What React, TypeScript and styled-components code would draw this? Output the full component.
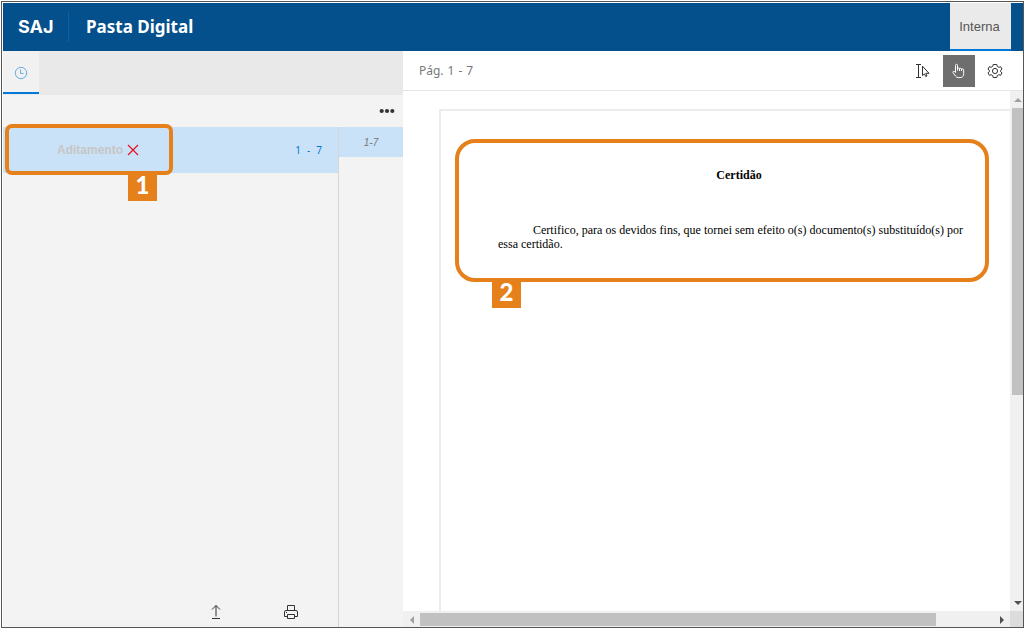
import React from "react";
import styled, { createGlobalStyle } from "styled-components";

const ui = `"Noto Sans", "Open Sans", sans-serif`;
const arial = `"Liberation Sans", Arial, sans-serif`;
const orange = "#e5801b";

const GlobalStyle = createGlobalStyle`
  * { box-sizing: border-box; }
  body { margin: 0; background: #fff; font-family: ${ui}; color: #333; }
  button { font: inherit; color: inherit; border: 0; padding: 0; margin: 0; background: none; cursor: pointer; }
  h1, h2, p { margin: 0; }
  svg { display: block; flex: none; }
`;

const Screen = styled.div`
  height: 100vh;
  padding: 1px;
`;

const Frame = styled.div`
  height: 100%;
  display: flex;
  flex-direction: column;
  border: 1px solid #555;
  padding: 1px 0 0 1px;
`;

const Header = styled.header`
  height: 48px;
  flex: none;
  display: flex;
  align-items: center;
  background: #03508c;
  color: #fff;
  padding: 0 12px 0 15px;
`;

const Logo = styled.span`
  font: 700 18px/24px Inter, sans-serif;
  width: 50px;
`;

const Title = styled.h1`
  font: 700 17px/30px ${ui};
  border-left: 1px solid #0863b1;
  padding-left: 17px;
`;

const ProfileTab = styled.button`
  && {
    align-self: stretch;
    margin-left: auto;
    width: 61px;
    padding: 2px 2px 0 0;
    background: #eaeaea;
    border-bottom: 2px solid #0078d7;
    color: #555;
    font: 13px/16px ${arial};
  }
`;

const Main = styled.div`
  flex: 1;
  min-height: 0;
  display: flex;
`;

const Sidebar = styled.aside`
  width: 400px;
  flex: none;
  display: flex;
  flex-direction: column;
  background: #f3f3f3;
`;

const TabBar = styled.div`
  height: 44px;
  padding-bottom: 1px;
  display: flex;
  background: #e9e9e9;
`;

const Tab = styled.button`
  && {
    width: 36px;
    padding-top: 2px;
    display: grid;
    place-items: center;
    background: #f1f1f1;
    border-bottom: 2px solid #0078d7;
  }
`;

const MoreRow = styled.div`
  height: 32px;
  display: flex;
  align-items: center;
  justify-content: flex-end;
  padding-right: 8px;
`;

const Columns = styled.div`
  flex: 1;
  min-height: 0;
  display: flex;
`;

const DocColumn = styled.div`
  flex: 1;
  display: flex;
  flex-direction: column;
`;

const ThumbColumn = styled.div`
  width: 65px;
  border-left: 1px solid #d6d6d6;
`;

const DocRow = styled.div`
  position: relative;
  height: 46px;
  display: flex;
  align-items: center;
  gap: 4px;
  padding: 0 16px 0 54px;
  background: #cae2f7;
`;

const DocName = styled.button`
  && {
    font: 700 12px/16px ${arial};
    color: #c6c6c6;
  }
`;

const PageRange = styled.span`
  margin-left: auto;
  display: flex;
  gap: 6px;
  font: 10px/16px ${ui};
  color: #0078d7;
`;

const ThumbItem = styled.button`
  && {
    display: block;
    width: 100%;
    height: 30px;
    padding-top: 2px;
    background: #cae2f7;
    color: #777;
    font: italic 10px/16px ${arial};
  }
`;

const SideFooter = styled.div`
  margin-top: auto;
  height: 30px;
  display: flex;
  align-items: center;
  justify-content: flex-end;
  gap: 59px;
  padding-right: 39px;
`;

const Viewer = styled.main`
  flex: 1;
  min-width: 0;
  display: flex;
  flex-direction: column;
`;

const Toolbar = styled.div`
  height: 40px;
  flex: none;
  display: flex;
  align-items: center;
  justify-content: flex-end;
  gap: 4px;
  padding: 0 12px 0 16px;
  border-bottom: 1px solid #e5e5e5;
`;

const PageLabel = styled.span`
  margin-right: auto;
  font: 12px/16px ${ui};
  color: #777;
  display: flex;
  gap: 4px;
`;

const Tool = styled.button<{ $active?: boolean }>`
  && {
    width: 32px;
    height: 32px;
    display: grid;
    place-items: center;
    background: ${(p) => (p.$active ? "#6e6e6e" : "transparent")};
    color: ${(p) => (p.$active ? "#fff" : "#333")};
  }
`;

const ScrollArea = styled.div`
  flex: 1;
  min-height: 0;
  display: grid;
  grid-template-columns: minmax(0, 1fr) 13px;
  grid-template-rows: minmax(0, 1fr) 16px;
`;

const Canvas = styled.div`
  padding: 18px 0 0 36px;
  overflow: hidden;
`;

const Sheet = styled.article`
  height: 100%;
  border: 2px solid #ececec;
  border-width: 2px 0 0 2px;
  padding: 28px 21px 0 14px;
`;

const Highlighted = styled.section`
  position: relative;
  height: 143px;
  border: 4px solid ${orange};
  border-radius: 20px;
  padding: 25px 22px 0 39px;
  font: 12px/14px "Liberation Serif", "Times New Roman", serif;
  color: #000;
`;

const DocTitle = styled.h2`
  font-size: 12px;
  line-height: 14px;
  padding-left: 17px;
  text-align: center;
`;

const DocText = styled.p`
  margin-top: 41px;
  text-indent: 35px;
  text-align: justify;
`;

const NameCallout = styled.div`
  position: absolute;
  left: 2px;
  top: -3px;
  width: 168px;
  height: 51px;
  border: 4px solid ${orange};
  border-radius: 7px;
  pointer-events: none;
`;

const Badge = styled.span<{ $left: number }>`
  position: absolute;
  left: ${(p) => p.$left}px;
  top: 100%;
  width: 29px;
  height: 30px;
  background: ${orange};
  color: #fff;
  font: 900 24px/28px Lato, sans-serif;
  text-align: center;
`;

const Track = styled.div<{ $vertical?: boolean }>`
  display: flex;
  flex-direction: ${(p) => (p.$vertical ? "column" : "row")};
  background: #f0f0f0;
  padding: ${(p) => (p.$vertical ? "0 0 0 2px" : "2px 0 1px")};
`;

const ScrollButton = styled.button`
  && {
    flex: 0 0 17px;
    display: grid;
    place-items: center;
  }
`;

const Rail = styled.div`
  flex: 1;
`;

const Thumb = styled.div<{ $width?: string; $height?: string }>`
  width: ${(p) => p.$width ?? "100%"};
  height: ${(p) => p.$height ?? "100%"};
  background: #c1c1c1;
`;

const Corner = styled.div`
  background: #dcdcdc;
`;

const arrows = {
  up: "M0 6L4 2L8 6Z",
  down: "M0 2L4 6L8 2Z",
  left: "M6 0L2 4L6 8Z",
  right: "M2 0L6 4L2 8Z",
};

function Arrow({ dir, muted }: { dir: keyof typeof arrows; muted?: boolean }) {
  return (
    <svg width="8" height="8" viewBox="0 0 8 8">
      <path d={arrows[dir]} fill={muted ? "#a0a0a0" : "#505050"} />
    </svg>
  );
}

const ClockIcon = () => (
  <svg width="14" height="14" viewBox="0 0 14 14" fill="none" stroke="#68ade4">
    <circle cx="7" cy="7" r="5.7" />
    <path d="M6.5 3.5V7.5H9.5" />
  </svg>
);

const MoreIcon = () => (
  <svg width="16" height="6" viewBox="0 0 16 6" fill="#333">
    <circle cx="2.7" cy="3" r="2.1" />
    <circle cx="8" cy="3" r="2.1" />
    <circle cx="13.3" cy="3" r="2.1" />
  </svg>
);

const CrossIcon = () => (
  <svg width="12" height="12" viewBox="0 0 12 12" stroke="#e81123" strokeWidth="1.2">
    <path d="M1 1L11 11M11 1L1 11" />
  </svg>
);

const UploadIcon = () => (
  <svg width="16" height="16" viewBox="0 0 16 16" fill="none" stroke="#333">
    <path d="M8 12.5V1.5M4 5.5L8 1.5L12 5.5M4 14.5H12" />
  </svg>
);

const PrintIcon = () => (
  <svg width="16" height="16" viewBox="0 0 16 16" fill="none" stroke="#333">
    <path d="M4.5 6.5V1.5H11.5V6.5M4.5 12.5H1.5V8Q1.5 6.5 3 6.5H13Q14.5 6.5 14.5 8V12.5H11.5M4.5 10.5H11.5V14.5H4.5ZM3 8.5H4" />
  </svg>
);

const SelectIcon = () => (
  <svg width="16" height="16" viewBox="0 0 16 16" fill="none" stroke="#333">
    <path d="M1 1.5H6M1 14.5H6M3.5 1.5V14.5M7.5 3.2V12.6L9.4 10.9L10.8 13.6L12 13L10.8 10.3H14Z" />
  </svg>
);

const HandIcon = () => (
  <svg width="16" height="16" viewBox="0 0 16 16" fill="none" stroke="#fff" strokeLinejoin="round">
    <path d="M4.5 9.5V2.5Q4.5 1.3 5.5 1.3T6.5 2.5V7.5M6.5 6Q6.5 4.9 7.5 4.9T8.5 6V8M8.5 6.3Q8.5 5.3 9.5 5.3T10.5 6.3V8M10.5 6.8Q10.5 5.9 11.5 5.9T12.7 7V10.5Q12.7 14.6 9 14.6H7.2Q5.7 14.6 4.7 13.2L2 9.7Q1.6 8.8 2.4 8.3T3.8 8.7L4.5 9.5" />
  </svg>
);

const GearIcon = () => (
  <svg width="16" height="16" viewBox="0 0 16 16" fill="none" stroke="#333" strokeLinejoin="round">
    <path d="M6.2 1.5H9.8L10.3 3.4L11.9 4.3L13.7 3.7L15 6.2L13.6 7.3V8.7L15 9.8L13.7 12.3L11.9 11.7L10.3 12.6L9.8 14.5H6.2L5.7 12.6L4.1 11.7L2.3 12.3L1 9.8L2.4 8.7V7.3L1 6.2L2.3 3.7L4.1 4.3L5.7 3.4Z" />
    <circle cx="8" cy="8" r="2.6" />
  </svg>
);

export default function App() {
  return (
    <Screen>
      <GlobalStyle />
      <Frame>
        <Header>
          <Logo>SAJ</Logo>
          <Title>Pasta Digital</Title>
          <ProfileTab>Interna</ProfileTab>
        </Header>
        <Main>
          <Sidebar>
            <TabBar>
              <Tab aria-label="Recentes"><ClockIcon /></Tab>
            </TabBar>
            <MoreRow>
              <button aria-label="Mais opções"><MoreIcon /></button>
            </MoreRow>
            <Columns>
              <DocColumn>
                <DocRow>
                  <DocName>Aditamento</DocName>
                  <CrossIcon />
                  <PageRange><span>1</span><span>-</span><span>7</span></PageRange>
                  <NameCallout><Badge $left={119}>1</Badge></NameCallout>
                </DocRow>
                <SideFooter>
                  <button aria-label="Exportar"><UploadIcon /></button>
                  <button aria-label="Imprimir"><PrintIcon /></button>
                </SideFooter>
              </DocColumn>
              <ThumbColumn>
                <ThumbItem>1-7</ThumbItem>
              </ThumbColumn>
            </Columns>
          </Sidebar>
          <Viewer>
            <Toolbar>
              <PageLabel><span>Pág.</span><span>1</span><span>-</span><span>7</span></PageLabel>
              <Tool aria-label="Selecionar texto"><SelectIcon /></Tool>
              <Tool $active aria-label="Mover página"><HandIcon /></Tool>
              <Tool aria-label="Configurações"><GearIcon /></Tool>
            </Toolbar>
            <ScrollArea>
              <Canvas>
                <Sheet>
                  <Highlighted>
                    <DocTitle>Certidão</DocTitle>
                    <DocText>
                      Certifico, para os devidos fins, que tornei sem efeito o(s) documento(s) substituído(s) por essa certidão.
                    </DocText>
                    <Badge $left={33}>2</Badge>
                  </Highlighted>
                </Sheet>
              </Canvas>
              <Track $vertical>
                <ScrollButton aria-label="Rolar para cima"><Arrow dir="up" muted /></ScrollButton>
                <Rail><Thumb $height="59%" /></Rail>
                <ScrollButton aria-label="Rolar para baixo"><Arrow dir="down" /></ScrollButton>
              </Track>
              <Track>
                <ScrollButton aria-label="Rolar para a esquerda"><Arrow dir="left" muted /></ScrollButton>
                <Rail><Thumb $width="90%" /></Rail>
                <ScrollButton aria-label="Rolar para a direita"><Arrow dir="right" /></ScrollButton>
              </Track>
              <Corner />
            </ScrollArea>
          </Viewer>
        </Main>
      </Frame>
    </Screen>
  );
}
